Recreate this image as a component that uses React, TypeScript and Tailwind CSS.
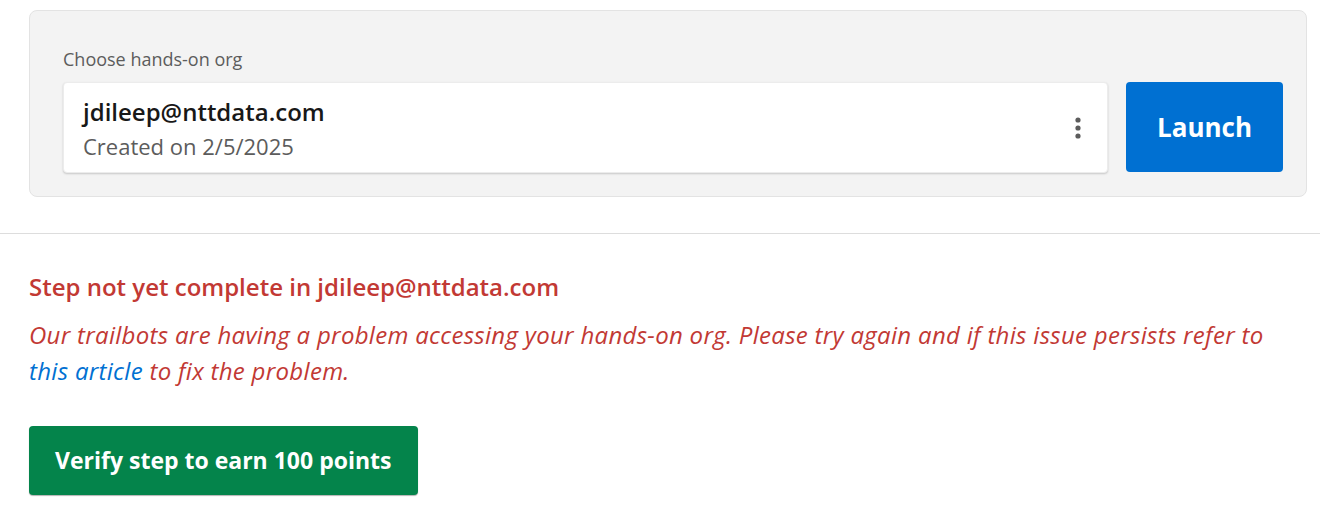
import React from "react";

export default function App() {
  const font = { fontFamily: '"Open Sans", "Noto Sans", sans-serif' };
  return (
    <div className="w-[1320px] h-[520px] bg-white overflow-hidden" style={font}>
      <div className="pl-[29px] pr-[13px] pt-[10px]">
        <div className="rounded-lg border border-[#e3e3e3] bg-[#f3f3f3] pl-[33px] pr-[23px] pt-[36px] pb-[23px]">
          <div className="text-[18px] leading-[24px] text-[#5c5c5c] mb-[11px]">Choose hands-on org</div>
          <div className="flex gap-[18px]">
            <div className="flex-1 h-[91px] bg-white rounded-[4px] shadow-[0_1px_2px_rgba(0,0,0,0.18)] border border-[#ececec] flex items-center pl-[19px] pr-[26px]">
              <div className="flex-1 pt-[2px]">
                <div className="text-[24px] leading-[30px] font-semibold text-[#181818]">jdileep@nttdata.com</div>
                <div className="text-[22px] leading-[30px] text-[#5c5c5c] mt-[4px]">Created on 2/5/2025</div>
              </div>
              <svg width="6" height="22" viewBox="0 0 6 22">
                <circle cx="3" cy="3" r="2.6" fill="#5c5c5c" />
                <circle cx="3" cy="11" r="2.6" fill="#5c5c5c" />
                <circle cx="3" cy="19" r="2.6" fill="#5c5c5c" />
              </svg>
            </div>
            <button className="w-[157px] h-[90px] bg-[#0070d2] rounded-[4px] text-white text-[26px] font-bold">Launch</button>
          </div>
        </div>
      </div>
      <div className="mt-[36px] border-t border-[#dddddd]" />
      <div className="px-[29px] pt-[38px]">
        <div className="text-[24px] leading-[30px] font-semibold text-[#c23934]">Step not yet complete in jdileep@nttdata.com</div>
        <p className="mt-[15px] text-[24px] leading-[36px] italic tracking-[0.3px] text-[#c23934] pr-[20px]">
          Our trailbots are having a problem accessing your hands-on org. Please try again and if this issue persists refer to{" "}
          <a className="text-[#0070d2]">this article</a> to fix the problem.
        </p>
        <button className="mt-[37px] h-[69px] px-[26px] bg-[#04844b] rounded-[4px] text-white text-[23px] font-bold shadow-[0_1px_1px_rgba(0,0,0,0.3)]">
          Verify step to earn 100 points
        </button>
      </div>
    </div>
  );
}
